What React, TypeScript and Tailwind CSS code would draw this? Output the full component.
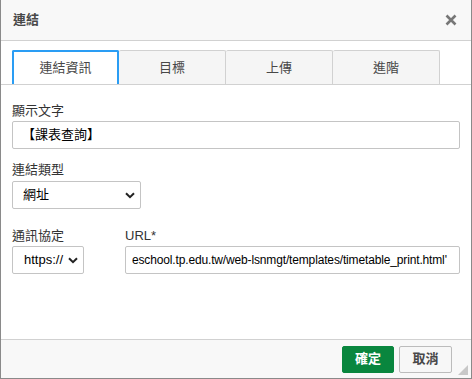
import React from "react";

const tabs = ["連結資訊", "目標", "上傳", "進階"];

function Chevron() {
  return (
    <svg width="10" height="7" viewBox="0 0 10 7" className="shrink-0">
      <path d="M1 1.2 L5 5.2 L9 1.2" fill="none" stroke="#222" strokeWidth="2" />
    </svg>
  );
}

export default function App() {
  return (
    <div
      className="relative w-[472px] h-[379px] flex flex-col bg-white border-x border-b border-[#8a8a8a] text-[13px] text-[#333]"
      style={{ fontFamily: '"Liberation Sans", Arial, "Noto Sans CJK TC", sans-serif' }}
    >
      {/* title */}
      <div className="h-[41px] shrink-0 flex items-center justify-between pl-[12px] pr-[14px] bg-[#f8f8f8] border-b border-[#d1d1d1]">
        <span className="text-[13px] font-bold text-[#484848]">連結</span>
        <svg width="12" height="12" viewBox="0 0 12 12">
          <path d="M1.5 1.5 L10.5 10.5 M10.5 1.5 L1.5 10.5" stroke="#777" strokeWidth="2.6" />
        </svg>
      </div>

      {/* tabs */}
      <div className="flex px-[11px] pt-[9px] border-b border-[#d1d1d1]">
        {tabs.map((t, i) =>
          i === 0 ? (
            <div
              key={t}
              className="w-[107px] h-[34px] -mb-px flex items-center justify-center bg-white border-2 border-b-0 border-[#2a9df4] rounded-t-[2px] text-[#484848]"
            >
              {t}
            </div>
          ) : (
            <div
              key={t}
              className="w-[107px] h-[34px] flex items-center justify-center bg-[#f5f5f5] border border-b-0 border-l-0 border-[#d1d1d1] rounded-t-[2px] text-[#484848]"
            >
              {t}
            </div>
          )
        )}
      </div>

      {/* panel */}
      <div className="flex-1 px-[11px] pt-[18px]">
        <div className="leading-[16px] mb-[2px]">顯示文字</div>
        <div className="h-[28px] flex items-center px-[9px] border border-[#c4c4c4] rounded-[2px] text-black">
          【課表查詢】
        </div>

        <div className="leading-[16px] mt-[13px] mb-[3px]">連結類型</div>
        <div className="w-[129px] h-[28px] flex items-center justify-between pl-[10px] pr-[5px] border border-[#c4c4c4] rounded-[2px] text-black">
          <span>網址</span>
          <Chevron />
        </div>

        <div className="flex gap-[41px] mt-[19px]">
          <div className="flex flex-col">
            <div className="leading-[16px] mb-[2px]">通訊協定</div>
            <div className="w-[72px] h-[28px] flex items-center justify-between pl-[11px] pr-[5px] border border-[#c4c4c4] rounded-[2px] text-black">
              <span>https://</span>
              <Chevron />
            </div>
          </div>
          <div className="flex-1 flex flex-col min-w-0">
            <div className="leading-[16px] mb-[2px]">URL*</div>
            <div className="h-[28px] flex items-center pl-[6px] border border-[#c4c4c4] rounded-[2px] text-black text-[12px] overflow-hidden whitespace-nowrap tracking-[-0.15px]">
              eschool.tp.edu.tw/web-lsnmgt/templates/timetable_print.html'
            </div>
          </div>
        </div>
      </div>

      {/* footer */}
      <div className="relative h-[39px] shrink-0 flex items-center justify-end gap-[5px] pr-[19px] bg-[#f8f8f8] border-t border-[#d1d1d1]">
        <div className="w-[52px] h-[27px] flex items-center justify-center bg-[#09863e] border border-[#09863e] rounded-[2px] text-white font-bold">
          確定
        </div>
        <div className="w-[53px] h-[27px] flex items-center justify-center bg-[#f7f7f7] border border-[#bcbcbc] rounded-[2px] text-[#484848] font-bold">
          取消
        </div>
        <svg width="10" height="10" viewBox="0 0 10 10" className="absolute right-[3px] bottom-[3px]">
          <path d="M10 0 L10 10 L0 10 Z" fill="#c8c8c8" />
        </svg>
      </div>
    </div>
  );
}
